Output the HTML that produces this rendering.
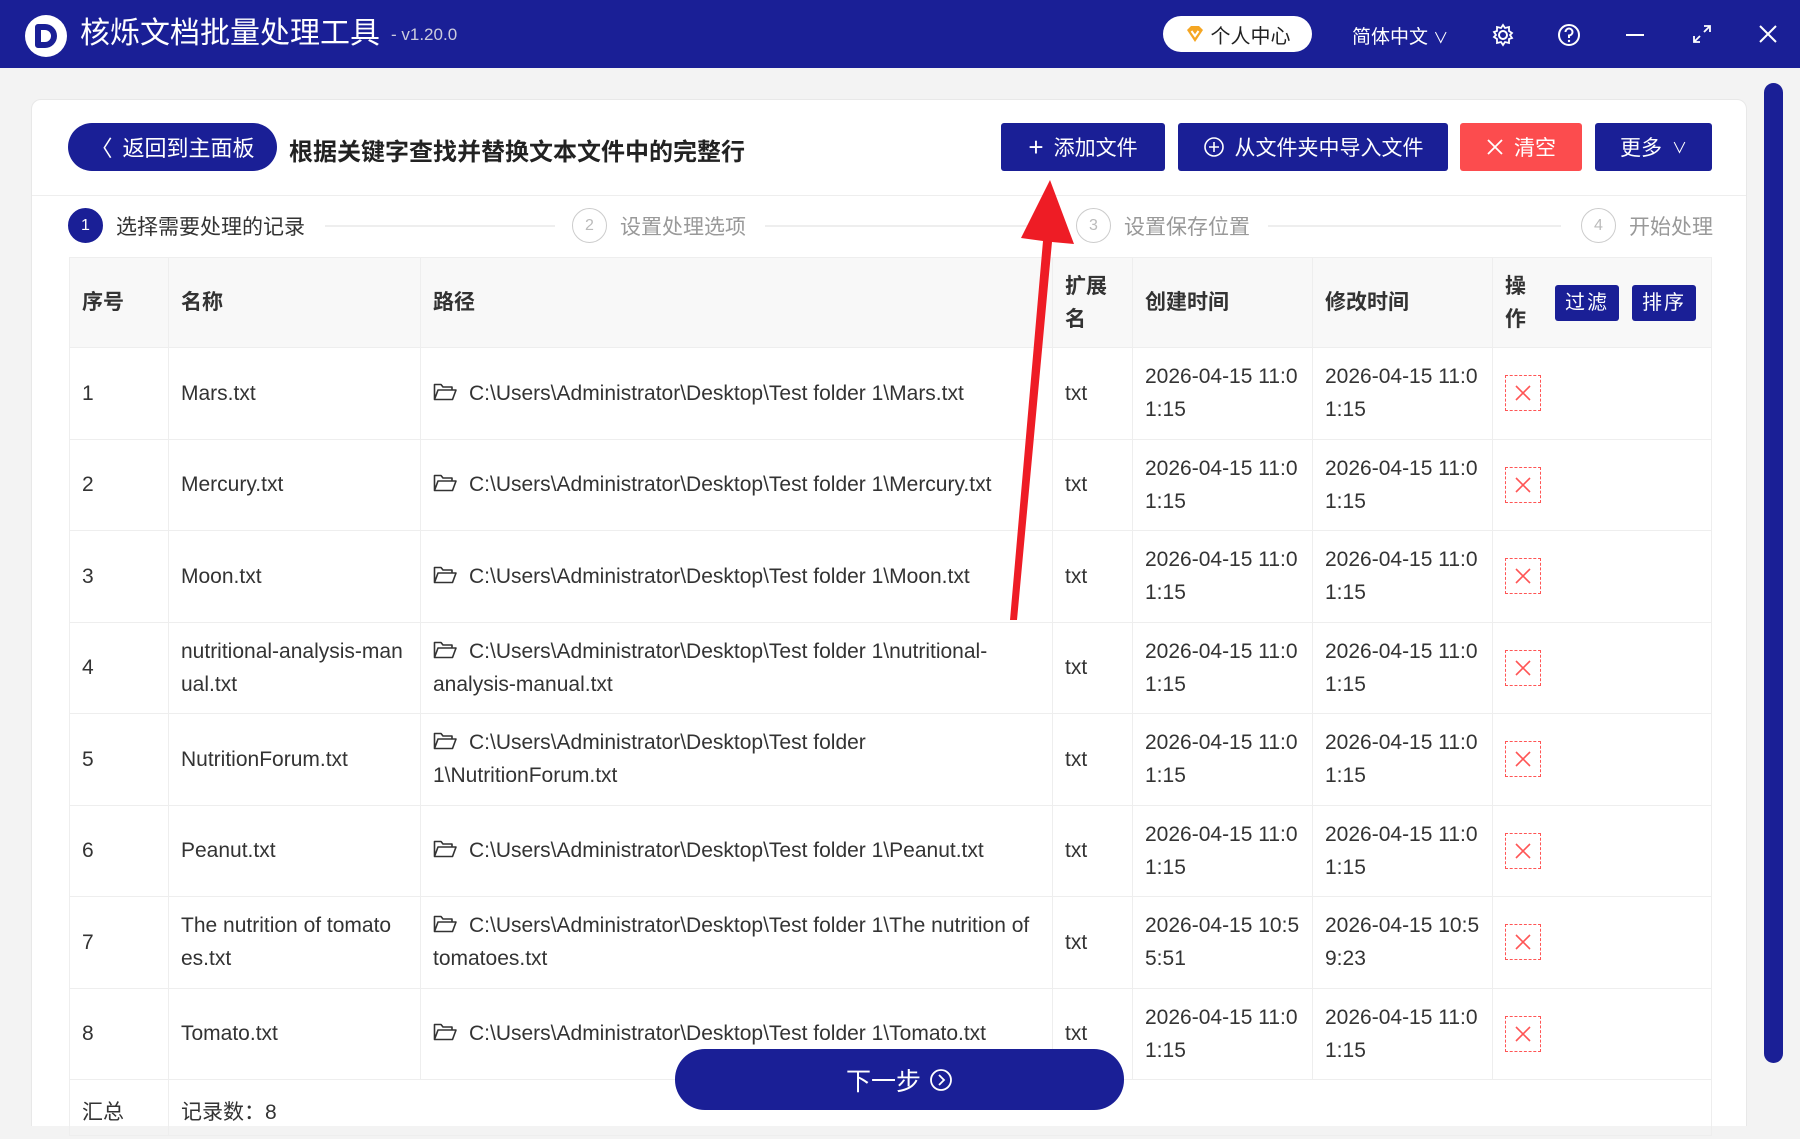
<!DOCTYPE html>
<html><head><meta charset="utf-8">
<style>
*{box-sizing:border-box;margin:0;padding:0}
body{width:1800px;height:1139px;overflow:hidden;background:#f3f3f3;font-family:"Liberation Sans","Noto Sans CJK SC",sans-serif;color:#333;position:relative}
.top{position:absolute;left:0;top:0;width:1800px;height:68px;background:#1a1f96;color:#fff}
.abs{position:absolute}
.card{position:absolute;left:31px;top:99px;width:1716px;height:1040px;background:#fff;border:1px solid #e8e8e8;border-radius:10px}
.btn{position:absolute;background:#1a1f96;color:#fff;font-size:21px;display:flex;align-items:center;justify-content:center;border-radius:3px;gap:10px}
.step{position:absolute;top:208px;font-size:21px;color:#999;display:flex;align-items:center;gap:13px}
.circ{width:35px;height:35px;border-radius:50%;border:1.5px solid #ccc;display:flex;align-items:center;justify-content:center;font-size:16px;color:#bbb}
.line{position:absolute;top:225px;height:2px;background:#eee}
table{position:absolute;left:69px;top:257px;border-collapse:collapse;table-layout:fixed;font-size:21px;color:#333}
td,th{border:1px solid #eee;padding:0 12px;text-align:left;vertical-align:middle;line-height:33px;font-weight:normal}
th{background:#f8f8f8;font-weight:bold;height:90px;font-size:21px}
tbody tr td{height:91.5px}
.del{width:36px;height:36px;border:1.5px dashed #f55;display:flex;align-items:center;justify-content:center}
.fb{position:absolute;top:27px;width:64px;height:36px;background:#1a1f96;color:#fff;font-size:20px;display:flex;align-items:center;justify-content:center;border-radius:3px;font-weight:normal;letter-spacing:2px}
</style></head><body>
<div class="top">
 <div class="abs" style="left:25px;top:15px;width:42px;height:42px;border-radius:50%;background:#fff;display:flex;align-items:center;justify-content:center"><div style="width:22px;height:24px;border:6px solid #1a1f96;border-radius:3px 12px 12px 3px"></div></div>
 <div class="abs" style="left:80px;top:14px;font-size:30px;line-height:40px">核烁文档批量处理工具</div>
 <div class="abs" style="left:391px;top:25px;font-size:17px;color:#ccd">- v1.20.0</div>
 <div class="abs" style="left:1163px;top:16px;width:149px;height:36px;border-radius:18px;background:#fff;color:#222;font-size:20px;display:flex;align-items:center;justify-content:center;gap:6px"><svg width="20" height="20" viewBox="0 0 20 20"><path d="M2 6 L6 2 H14 L18 6 L10 18 Z" fill="#f5a623"/><path d="M6.5 7 L10 12 L13.5 7" stroke="#fff" stroke-width="2" fill="none"/></svg>个人中心</div>
 <div class="abs" style="left:1352px;top:22px;font-size:19px">简体中文 <span style="font-size:15px">∨</span></div>
 <svg class="abs" style="left:1490px;top:22px" width="26" height="26" viewBox="0 0 26 26"><circle cx="13" cy="13" r="4" fill="none" stroke="#fff" stroke-width="2"/><path d="M13 3 L15 6 L19 5 L19 9 L22 11 L20 13 L22 16 L19 17 L19 21 L15 20 L13 23 L11 20 L7 21 L7 17 L4 15 L6 13 L4 10 L7 9 L7 5 L11 6 Z" fill="none" stroke="#fff" stroke-width="1.8"/></svg>
 <svg class="abs" style="left:1556px;top:22px" width="26" height="26" viewBox="0 0 26 26"><circle cx="13" cy="13" r="10" fill="none" stroke="#fff" stroke-width="2"/><path d="M9.5 10 a3.5 3.5 0 1 1 3.5 3.5 v2.5" fill="none" stroke="#fff" stroke-width="2"/><circle cx="13" cy="19" r="1.2" fill="#fff"/></svg>
 <div class="abs" style="left:1626px;top:34px;width:18px;height:2px;background:#fff"></div>
 <svg class="abs" style="left:1692px;top:24px" width="20" height="20" viewBox="0 0 20 20"><path d="M12 2 H18 V8 M18 2 L12 8 M8 18 H2 V12 M2 18 L8 12" stroke="#fff" stroke-width="1.8" fill="none"/></svg>
 <svg class="abs" style="left:1759px;top:25px" width="18" height="18" viewBox="0 0 18 18"><path d="M1 1 L17 17 M17 1 L1 17" stroke="#fff" stroke-width="2"/></svg>
</div>
<div class="abs" style="left:1764px;top:83px;width:19px;height:980px;border-radius:10px;background:#1a1f96"></div>
<div class="card"></div>
<div class="abs" style="left:31px;top:1126px;width:1716px;height:13px;background:#f3f3f3"></div>
<div class="btn" style="left:68px;top:123px;width:209px;height:48px;border-radius:24px;font-size:22px"><span style="font-size:22px">〈</span>返回到主面板</div>
<div class="abs" style="left:289px;top:132px;font-size:24px;font-weight:bold;color:#222">根据关键字查找并替换文本文件中的完整行</div>
<div class="btn" style="left:1001px;top:123px;width:164px;height:48px"><span style="font-size:26px;font-weight:200">+</span>添加文件</div>
<div class="btn" style="left:1178px;top:123px;width:270px;height:48px"><svg width="22" height="22" viewBox="0 0 22 22"><circle cx="11" cy="11" r="9" fill="none" stroke="#fff" stroke-width="1.6"/><path d="M11 6 V16 M6 11 H16" stroke="#fff" stroke-width="1.6"/></svg>从文件夹中导入文件</div>
<div class="btn" style="left:1460px;top:123px;width:122px;height:48px;background:#fc4c4e"><svg width="18" height="18" viewBox="0 0 18 18"><path d="M2 2 L16 16 M16 2 L2 16" stroke="#fff" stroke-width="1.8"/></svg>清空</div>
<div class="btn" style="left:1595px;top:123px;width:117px;height:48px">更多 <span style="font-size:15px">∨</span></div>
<div class="abs" style="left:32px;top:195px;width:1714px;height:1px;background:#eee"></div>
<div class="step" style="left:68px;color:#333"><div class="circ" style="background:#1a1f96;border-color:#1a1f96;color:#fff">1</div>选择需要处理的记录</div>
<div class="line" style="left:325px;width:230px"></div>
<div class="step" style="left:572px"><div class="circ">2</div>设置处理选项</div>
<div class="line" style="left:765px;width:291px"></div>
<div class="step" style="left:1076px"><div class="circ">3</div>设置保存位置</div>
<div class="line" style="left:1268px;width:293px"></div>
<div class="step" style="left:1581px"><div class="circ">4</div>开始处理</div>
<table>
<colgroup><col style="width:99px"><col style="width:252px"><col style="width:632px"><col style="width:80px"><col style="width:180px"><col style="width:180px"><col style="width:219px"></colgroup>
<thead><tr><th>序号</th><th>名称</th><th>路径</th><th>扩展<br>名</th><th>创建时间</th><th>修改时间</th><th style="position:relative">操<br>作<div class="fb" style="left:62px">过滤</div><div class="fb" style="left:139px">排序</div></th></tr></thead>
<tbody>
<tr><td>1</td><td>Mars.txt</td><td><span class="f"></span>C:\Users\Administrator\Desktop\Test folder 1\Mars.txt</td><td>txt</td><td>2026-04-15 11:0<br>1:15</td><td>2026-04-15 11:0<br>1:15</td><td><div class="del"></div></td></tr>
<tr><td>2</td><td>Mercury.txt</td><td><span class="f"></span>C:\Users\Administrator\Desktop\Test folder 1\Mercury.txt</td><td>txt</td><td>2026-04-15 11:0<br>1:15</td><td>2026-04-15 11:0<br>1:15</td><td><div class="del"></div></td></tr>
<tr><td>3</td><td>Moon.txt</td><td><span class="f"></span>C:\Users\Administrator\Desktop\Test folder 1\Moon.txt</td><td>txt</td><td>2026-04-15 11:0<br>1:15</td><td>2026-04-15 11:0<br>1:15</td><td><div class="del"></div></td></tr>
<tr><td>4</td><td>nutritional-analysis-man<br>ual.txt</td><td><span class="f"></span>C:\Users\Administrator\Desktop\Test folder 1\nutritional-<br>analysis-manual.txt</td><td>txt</td><td>2026-04-15 11:0<br>1:15</td><td>2026-04-15 11:0<br>1:15</td><td><div class="del"></div></td></tr>
<tr><td>5</td><td>NutritionForum.txt</td><td><span class="f"></span>C:\Users\Administrator\Desktop\Test folder<br>1\NutritionForum.txt</td><td>txt</td><td>2026-04-15 11:0<br>1:15</td><td>2026-04-15 11:0<br>1:15</td><td><div class="del"></div></td></tr>
<tr><td>6</td><td>Peanut.txt</td><td><span class="f"></span>C:\Users\Administrator\Desktop\Test folder 1\Peanut.txt</td><td>txt</td><td>2026-04-15 11:0<br>1:15</td><td>2026-04-15 11:0<br>1:15</td><td><div class="del"></div></td></tr>
<tr><td>7</td><td>The nutrition of tomato<br>es.txt</td><td><span class="f"></span>C:\Users\Administrator\Desktop\Test folder 1\The nutrition of<br>tomatoes.txt</td><td>txt</td><td>2026-04-15 10:5<br>5:51</td><td>2026-04-15 10:5<br>9:23</td><td><div class="del"></div></td></tr>
<tr><td>8</td><td>Tomato.txt</td><td><span class="f"></span>C:\Users\Administrator\Desktop\Test folder 1\Tomato.txt</td><td>txt</td><td>2026-04-15 11:0<br>1:15</td><td>2026-04-15 11:0<br>1:15</td><td><div class="del"></div></td></tr>
<tr><td style="height:56px;padding-top:10px">汇总</td><td colspan="6" style="height:56px;padding-top:10px">记录数：8</td></tr>
</tbody></table>
<div class="btn" style="left:675px;top:1049px;width:449px;height:61px;border-radius:30px;font-size:25px;gap:8px">下一步<svg width="24" height="24" viewBox="0 0 24 24"><circle cx="12" cy="12" r="10" fill="none" stroke="#fff" stroke-width="1.8"/><path d="M10 7 L15 12 L10 17" stroke="#fff" stroke-width="1.8" fill="none"/></svg></div>
<svg class="abs" style="left:0;top:0" width="1800" height="1139"><polygon points="1010,620 1017,620 1052,242 1074,244 1050,180 1021,238 1043,241" fill="#ee1c25"/></svg>
<script>
document.querySelectorAll('.f').forEach(e=>{e.outerHTML='<svg width="24" height="18" viewBox="0 0 24 18" style="margin-right:12px;vertical-align:-1px"><path d="M1.5 16.5 V1.5 H8 L10 4 H19 V7 M1.5 16.5 L5 7 H23 L19.5 16.5 Z" fill="none" stroke="#333" stroke-width="1.6" stroke-linejoin="round"/></svg>'});
document.querySelectorAll('.del').forEach(e=>{e.innerHTML='<svg width="18" height="18" viewBox="0 0 18 18"><path d="M2 2 L16 16 M16 2 L2 16" stroke="#f55" stroke-width="1.6"/></svg>'});
</script>
</body></html>
